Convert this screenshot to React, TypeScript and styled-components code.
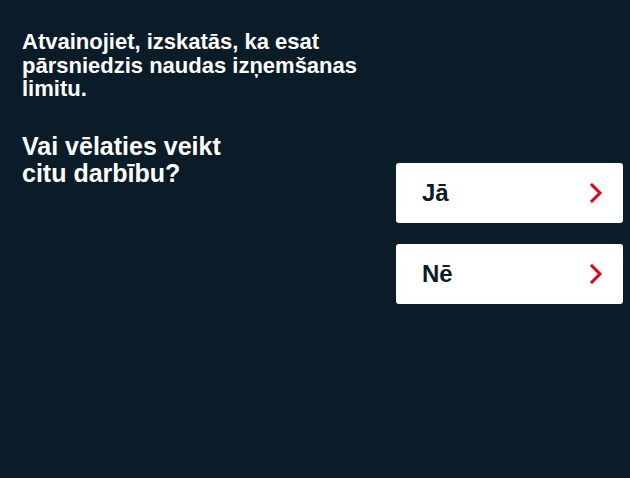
import React from "react";
import styled, { createGlobalStyle } from "styled-components";

const GlobalStyle = createGlobalStyle`
  html, body {
    margin: 0;
    padding: 0;
    background: #0b1c29;
  }
  * { box-sizing: border-box; }
`;

const Screen = styled.main`
  width: 630px;
  height: 478px;
  background: #0b1c29;
  display: flex;
  flex-direction: row;
  padding: 30px 7px 0 22px;
  font-family: "Liberation Sans", Arial, Helvetica, sans-serif;
  color: #ffffff;
`;

const TextColumn = styled.section`
  flex: 1;
  display: flex;
  flex-direction: column;
  gap: 32px;
`;

const Message = styled.p`
  margin: 0;
  max-width: 360px;
  font-size: 22px;
  font-weight: 700;
  line-height: 23.5px;
`;

const Question = styled.h1`
  margin: 0;
  max-width: 240px;
  font-size: 25px;
  font-weight: 700;
  line-height: 27px;
`;

const Options = styled.nav`
  width: 227px;
  flex-shrink: 0;
  padding-top: 133px;
  display: flex;
  flex-direction: column;
  gap: 21px;
`;

const OptionButton = styled.button`
  height: 60px;
  width: 100%;
  display: flex;
  align-items: center;
  justify-content: space-between;
  padding: 0 20px 0 26px;
  background: #ffffff;
  border: none;
  border-radius: 3px;
  font-family: inherit;
  font-size: 24px;
  font-weight: 700;
  color: #0b1c29;
  cursor: pointer;
`;

const Chevron = () => (
  <svg width="14" height="20" viewBox="0 0 14 20" aria-hidden="true">
    <path d="M3 2 L11 10 L3 18" fill="none" stroke="#e2001a" strokeWidth="3" strokeLinecap="square" />
  </svg>
);

export default function App() {
  return (
    <>
      <GlobalStyle />
      <Screen>
        <TextColumn>
          <Message>Atvainojiet, izskatās, ka esat pārsniedzis naudas izņemšanas limitu.</Message>
          <Question>Vai vēlaties veikt citu darbību?</Question>
        </TextColumn>
        <Options>
          <OptionButton>
            <span>Jā</span>
            <Chevron />
          </OptionButton>
          <OptionButton>
            <span>Nē</span>
            <Chevron />
          </OptionButton>
        </Options>
      </Screen>
    </>
  );
}
